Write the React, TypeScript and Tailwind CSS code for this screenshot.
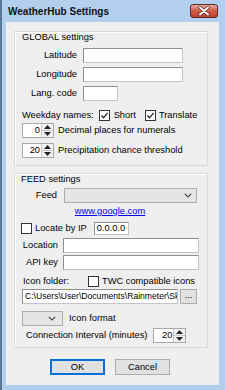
import React from "react";

const Check = () => (
  <svg width="9" height="9" viewBox="0 0 9 9">
    <path d="M1.5 4.5 L3.6 6.8 L7.6 1.8" fill="none" stroke="#222" strokeWidth="1.3" />
  </svg>
);

const CheckBox = ({ checked }: { checked?: boolean }) => (
  <div className="w-[11px] h-[11px] bg-white border border-[#333] flex items-center justify-center shrink-0">
    {checked ? <Check /> : null}
  </div>
);

const Spinner = ({ value, w }: { value: string; w: string }) => (
  <div className={`${w} h-[15px] bg-white border border-[#a9a9a9] flex shrink-0`}>
    <div className="flex-1 text-right pr-[1px] leading-[13px]">{value}</div>
    <div className="w-[12px] flex flex-col border-l border-[#c8c8c8] bg-[#f2f2f2]">
      <div className="flex-1 flex items-center justify-center border-b border-[#c8c8c8]">
        <svg width="7" height="4" viewBox="0 0 7 4"><path d="M0 4 L3.5 0 L7 4 Z" fill="#222" /></svg>
      </div>
      <div className="flex-1 flex items-center justify-center">
        <svg width="7" height="4" viewBox="0 0 7 4"><path d="M0 0 L3.5 4 L7 0 Z" fill="#222" /></svg>
      </div>
    </div>
  </div>
);

const Input = ({ w, h = "h-[15px]", children }: { w: string; h?: string; children?: React.ReactNode }) => (
  <div className={`${w} ${h} bg-white border border-[#8f8f8f] border-b-[#c4c4c4] border-r-[#c4c4c4] shrink-0 overflow-hidden whitespace-nowrap leading-[13px] pl-[2px]`}>
    {children}
  </div>
);

const Chevron = () => (
  <svg width="8" height="5" viewBox="0 0 8 5">
    <path d="M0.8 0.8 L4 4 L7.2 0.8" fill="none" stroke="#444" strokeWidth="1.1" />
  </svg>
);

export default function App() {
  return (
    <div className="w-[225px] h-[390px] bg-[#b3cfee] flex flex-col overflow-hidden border-l-2 border-[#587898] font-['Liberation_Sans',Arial,sans-serif] text-[9.3px] text-black leading-[11px]">
      {/* Title bar */}
      <div className="h-[22px] flex items-start justify-between pl-[6px] pr-[7px] shrink-0">
        <div className="font-bold text-[10px] leading-[12px] pt-[6px] text-[#111]">WeatherHub Settings</div>
        <div className="mt-[4px] w-[28px] h-[14px] rounded-[3px] border border-[#5d2a2a] bg-gradient-to-b from-[#e3a99f] via-[#cf5a48] to-[#c2432f] flex items-center justify-center">
          <svg width="12" height="10" viewBox="0 0 12 10">
            <path d="M2 1.5 L10 8.5 M10 1.5 L2 8.5" stroke="#5a1f1f" strokeWidth="3.4" strokeLinecap="round" />
            <path d="M2 1.5 L10 8.5 M10 1.5 L2 8.5" stroke="#ffffff" strokeWidth="2" strokeLinecap="round" />
          </svg>
        </div>
      </div>

      {/* Client area */}
      <div className="ml-[4px] w-[213px] h-[363px] bg-[#efefef] shrink-0 pt-[9px] pl-[8px] flex flex-col">
        {/* GLOBAL settings */}
        <div className="w-[194px] h-[135px] border border-[#dadada] shadow-[inset_1px_1px_0_#ffffff] flex flex-col">
          <div className="pl-[7px]">GLOBAL settings</div>
          <div className="mt-[5px] grid grid-cols-[62px_auto] gap-x-[6px] gap-y-[4px] items-center">
            <div className="text-right">Latitude</div>
            <Input w="w-[100px]" />
            <div className="text-right">Longitude</div>
            <Input w="w-[100px]" />
            <div className="text-right">Lang. code</div>
            <Input w="w-[35px]" />
          </div>
          <div className="mt-[8px] pl-[7px] h-[12px] flex items-center">
            <span>Weekday names:</span>
            <div className="ml-[5px]"><CheckBox checked /></div>
            <span className="ml-[4px]">Short</span>
            <div className="ml-[9px]"><CheckBox checked /></div>
            <span className="ml-[3px]">Translate</span>
          </div>
          <div className="mt-[2px] pl-[7px] flex items-center gap-[4px]">
            <Spinner value="0" w="w-[32px]" />
            <span>Decimal places for numerals</span>
          </div>
          <div className="mt-[5px] pl-[7px] flex items-center gap-[4px]">
            <Spinner value="20" w="w-[32px]" />
            <span>Precipitation chance threshold</span>
          </div>
        </div>

        {/* FEED settings */}
        <div className="mt-[7px] w-[194px] h-[175px] border border-[#dadada] shadow-[inset_1px_1px_0_#ffffff] flex flex-col">
          <div className="pl-[6px]">FEED settings</div>
          <div className="mt-[3px] flex items-center">
            <div className="w-[42px] text-right">Feed</div>
            <div className="ml-[7px] w-[133px] h-[15px] bg-[#e5e5e5] border border-[#adadad] flex items-center justify-end pr-[4px]">
              <Chevron />
            </div>
          </div>
          <div className="mt-[3px] flex justify-center pr-[2px]">
            <span className="text-[#0000ee] underline">www.google.com</span>
          </div>
          <div className="mt-[5px] pl-[6px] h-[13px] flex items-center">
            <CheckBox />
            <span className="ml-[3px]">Locate by IP</span>
            <div className="ml-[7px]">
              <Input w="w-[35px]" h="h-[13px]">
                <span className="leading-[11px] block">0.0.0.0</span>
              </Input>
            </div>
          </div>
          <div className="mt-[3px] grid grid-cols-[43px_auto] gap-x-[5px] gap-y-[2px] items-center">
            <div className="text-right">Location</div>
            <Input w="w-[136px]" />
            <div className="text-right">API key</div>
            <Input w="w-[136px]" />
          </div>
          <div className="mt-[5px] pl-[8px] h-[12px] flex items-center">
            <span>Icon folder:</span>
            <div className="ml-[19px]"><CheckBox /></div>
            <span className="ml-[3px]">TWC compatible icons</span>
          </div>
          <div className="mt-[2px] pl-[7px] flex items-center gap-[2px]">
            <Input w="w-[156px]">
              <span className="text-[8.6px]">C:\Users\User\Documents\Rainmeter\Sk</span>
            </Input>
            <div className="w-[17px] h-[15px] bg-[#e1e1e1] border border-[#adadad] flex items-center justify-center leading-[9px] pb-[3px]">...</div>
          </div>
          <div className="mt-[7px] pl-[7px] flex items-center">
            <div className="w-[41px] h-[15px] bg-[#e5e5e5] border border-[#adadad] flex items-center justify-end pr-[6px]">
              <Chevron />
            </div>
            <span className="ml-[6px]">Icon format</span>
          </div>
          <div className="mt-[2px] pl-[11px] flex items-center">
            <span>Connection Interval (minutes)</span>
            <div className="ml-[6px]"><Spinner value="20" w="w-[33px]" /></div>
          </div>
        </div>

        {/* Buttons */}
        <div className="mt-[11px] ml-[36px] flex gap-[10px]">
          <div className="w-[55px] h-[16px] bg-[#e1e1e1] border-2 border-[#0a6fd8] flex items-center justify-center">OK</div>
          <div className="w-[55px] h-[16px] bg-[#e1e1e1] border border-[#adadad] flex items-center justify-center">Cancel</div>
        </div>
      </div>
    </div>
  );
}
